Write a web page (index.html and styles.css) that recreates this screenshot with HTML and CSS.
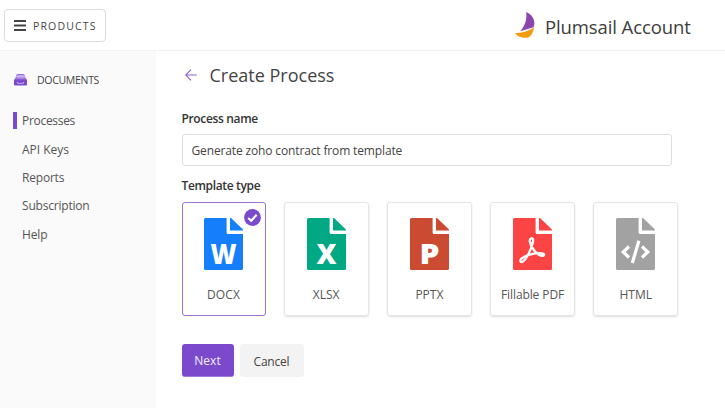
FILE: index.html
```html
<!DOCTYPE html>
<html lang="en">
<head>
<meta charset="utf-8">
<title>Plumsail Account</title>
<link rel="stylesheet" href="styles.css">
</head>
<body>
<svg class="defs" width="0" height="0" aria-hidden="true">
  <defs>
    <g id="file">
      <path d="M1.5 0H22.6V14.5Q22.6 16 24.1 16H39V50.5Q39 52 37.500 52H1.500Q0 52 0 50.500V1.500Q0 0 1.500 0Z"/>
      <path d="M26 0H27L39 11.500V12.500H26Z"/>
    </g>
  </defs>
</svg>
<header class="topbar">
  <button class="products">
    <svg width="12" height="12" viewBox="0 0 12 12"><path d="M0 1H12M0 5.500H12M0 10H12" stroke="#444" stroke-width="2"/></svg>
    <span class="t products-text">PRODUCTS</span>
  </button>
  <div class="brand">
    <svg width="20" height="27" viewBox="0 0 20 27">
      <path d="M11.200 0C18 3 21 9.500 18.500 15.300L5.200 19.200C10.500 13 12 7 11.200 0Z" fill="#8e44ad"/>
      <path d="M0 21.200C7 21.200 13 19.500 19 15.500C18.500 20 16.500 23.500 13.500 25.600C8 26.500 3 25 0 21.200Z" fill="#f39c12"/>
    </svg>
    <span class="t brand-text">Plumsail Account</span>
  </div>
</header>
<div class="layout">
  <nav class="sidebar">
    <div class="section">
      <svg width="13" height="12" viewBox="0 0 13 12">
        <path d="M3 0H10L11 2H2ZM2 2.500H11L12.500 6H.5Z" fill="#9a6de0"/>
        <path d="M0 5.500H13V10.500Q13 11.500 12 11.500H1Q0 11.500 0 10.500Z" fill="#7b49cc"/>
        <path d="M2.500 3.800H10.500M3.200 1.600H9.800" stroke="#d9c8f4" stroke-width=".7"/>
        <path d="M3.500 8V9.300H9.500V8" fill="none" stroke="#c6aaf0"/>
      </svg>
      <span class="t section-text">DOCUMENTS</span>
    </div>
    <a class="item active"><span class="t processes">Processes</span></a>
    <a class="item"><span class="t keys">API Keys</span></a>
    <a class="item"><span class="t reports">Reports</span></a>
    <a class="item"><span class="t subscription">Subscription</span></a>
    <a class="item"><span class="t help">Help</span></a>
  </nav>
  <main class="content">
    <div class="heading">
      <svg width="12" height="12" viewBox="0 0 12 12"><path d="M11.700 6H.9M6 .6L.7 6L6 11.400" fill="none" stroke="#8e63d6" stroke-width="1.100"/></svg>
      <h1 class="t title">Create Process</h1>
    </div>
    <label class="label"><span class="t name-label">Process name</span></label>
    <div class="input"><span class="t value">Generate zoho contract from template</span></div>
    <label class="label type"><span class="t type-label">Template type</span></label>
    <div class="cards">
      <div class="card selected">
        <svg class="check" width="17" height="17" viewBox="0 0 17 17"><circle cx="8.500" cy="8.500" r="8.400" fill="#7b49cc"/><path d="M4.200 9L7.200 11.700L12.700 5.800" fill="none" stroke="#fff" stroke-width="2.200"/></svg>
        <svg class="doc blue" width="39" height="52" viewBox="0 0 39 52"><use href="#file"/><text class="letter" x="19.500" y="45.500" textLength="26" lengthAdjust="spacingAndGlyphs">W</text></svg>
        <span class="t docx">DOCX</span>
      </div>
      <div class="card">
        <svg class="doc green" width="39" height="52" viewBox="0 0 39 52"><use href="#file"/><text class="letter x" x="19.500" y="45.500" textLength="20" lengthAdjust="spacingAndGlyphs">X</text></svg>
        <span class="t xlsx">XLSX</span>
      </div>
      <div class="card">
        <svg class="doc rust" width="39" height="52" viewBox="0 0 39 52"><use href="#file"/><text class="letter p" x="19.500" y="45.500" textLength="20" lengthAdjust="spacingAndGlyphs">P</text></svg>
        <span class="t pptx">PPTX</span>
      </div>
      <div class="card">
        <svg class="doc red" width="39" height="52" viewBox="0 0 39 52"><use href="#file"/><path d="M18.300 20.300C20.300 19.500 20.500 22.300 19.600 25.500C18 31.500 13.500 41.500 9.600 43.700C7.500 44.800 6.500 42.500 8.500 40.700C12.500 37 22.500 34.700 28.500 35.300C32.300 35.700 31.800 38.400 28.500 37.800C23.500 37 17.500 28.500 16.800 23.500C16.500 21.500 17 20.700 18.300 20.300Z" fill="none" stroke="#fff" stroke-width="2.300"/></svg>
        <span class="t pdf">Fillable PDF</span>
      </div>
      <div class="card">
        <svg class="doc gray" width="39" height="52" viewBox="0 0 39 52"><use href="#file"/><path d="M13 28.500L7.200 34L13 39.500M26 28.500L31.800 34L26 39.500" fill="none" stroke="#fff" stroke-width="3.200"/><path d="M22.900 22.800L16.300 45" stroke="#fff" stroke-width="3.200"/></svg>
        <span class="t html">HTML</span>
      </div>
    </div>
    <div class="actions">
      <button class="button primary"><span class="t next">Next</span></button>
      <button class="button"><span class="t cancel">Cancel</span></button>
    </div>
  </main>
</div>
</body>
</html>
```
FILE: styles.css
```css
* { box-sizing: border-box; }
body { margin: 0; width: 725px; height: 408px; overflow: hidden; background: #fff; color: #444; font: 12px/16px "Open Sans", "Noto Sans", sans-serif; }
.defs { position: absolute; }
svg { display: block; flex: none; }
button { font: inherit; color: inherit; }
.t { white-space: nowrap; }
.topbar { height: 51px; border-bottom: 1px solid #f3f3f3; display: flex; justify-content: space-between; align-items: flex-start; padding: 9px 34px 0 4px; }
.products { width: 102px; height: 33px; padding: 0 0 0 9px; display: flex; align-items: center; gap: 7px; background: #fff; border: 1px solid #dcdcdc; border-radius: 4px; }
.products-text { font-size: 10.500px; letter-spacing: 1.150px; padding-top: 1px; }
.brand { display: flex; gap: 10px; padding-top: 3px; }
.brand-text { font-size: 18.500px; line-height: 29px; width: 146px; color: #3d3d3d; letter-spacing: -.1px; }
.layout { display: flex; height: 357px; }
.sidebar { width: 156px; background: #fafafa; padding-top: 21px; }
.section { display: flex; align-items: center; gap: 10px; padding-left: 14px; height: 16px; margin-bottom: 19px; }
.section-text { font-size: 10.500px; letter-spacing: -.300px; }
.item { display: flex; align-items: center; height: 28.400px; padding-left: 22px; color: #555; }
.processes { letter-spacing: -.3px; }
.keys { letter-spacing: 0; }
.reports { letter-spacing: -.2px; }
.subscription { letter-spacing: -.2px; }
.help { letter-spacing: -.15px; }
.active { position: relative; }
.active::before { content: ""; position: absolute; left: 13px; top: 5px; width: 4px; height: 17px; background: #7b49cc; }
.content { padding: 12px 0 0 25.500px; }
.heading { display: flex; align-items: center; gap: 13px; height: 24px; padding-left: 3px; margin-bottom: 24px; }
.title { margin: 0; font-size: 18px; font-weight: 400; line-height: 24px; }
.label { display: block; height: 16px; margin-bottom: 7px; font-weight: 600; color: #333; }
.name-label { letter-spacing: -.350px; }
.type-label { letter-spacing: -.350px; }
.input { width: 490px; height: 32px; border: 1px solid #dedede; border-radius: 3px; display: flex; align-items: center; padding: 1px 0 0 9px; }
.value { letter-spacing: -.140px; }
.type { margin-top: 12px; margin-bottom: 8px; }
.cards { display: flex; gap: 18.200px; }
.card { position: relative; width: 85px; height: 114px; border: 1px solid #e5e5e5; border-radius: 3px; box-shadow: 0 1px 2px #0002; display: flex; flex-direction: column; align-items: center; padding-top: 15px; gap: 17px; color: #555; }
.selected { width: 84px; border-color: #9b73dc; box-shadow: none; }
.check { position: absolute; right: 4px; top: 6px; }
.blue { fill: #147efb; }
.green { fill: #00a884; }
.rust { fill: #cb4a32; }
.red { fill: #fc4444; }
.gray { fill: #a2a2a2; }
.letter { fill: #fff; font: 800 28px "Open Sans", sans-serif; text-anchor: middle; }
.docx { letter-spacing: .1px; }
.pdf { letter-spacing: -.1px; }
.actions { display: flex; gap: 6px; margin-top: 28px; }
.button { width: 64px; height: 33px; padding: 2px 0 0; border: 0; border-radius: 3px; background: #f3f3f3; }
.primary { width: 52px; background: #7b49cc; color: #f3edff; border-bottom: 1px solid #a07bdf; }
.cancel { letter-spacing: -.2px; }
```
